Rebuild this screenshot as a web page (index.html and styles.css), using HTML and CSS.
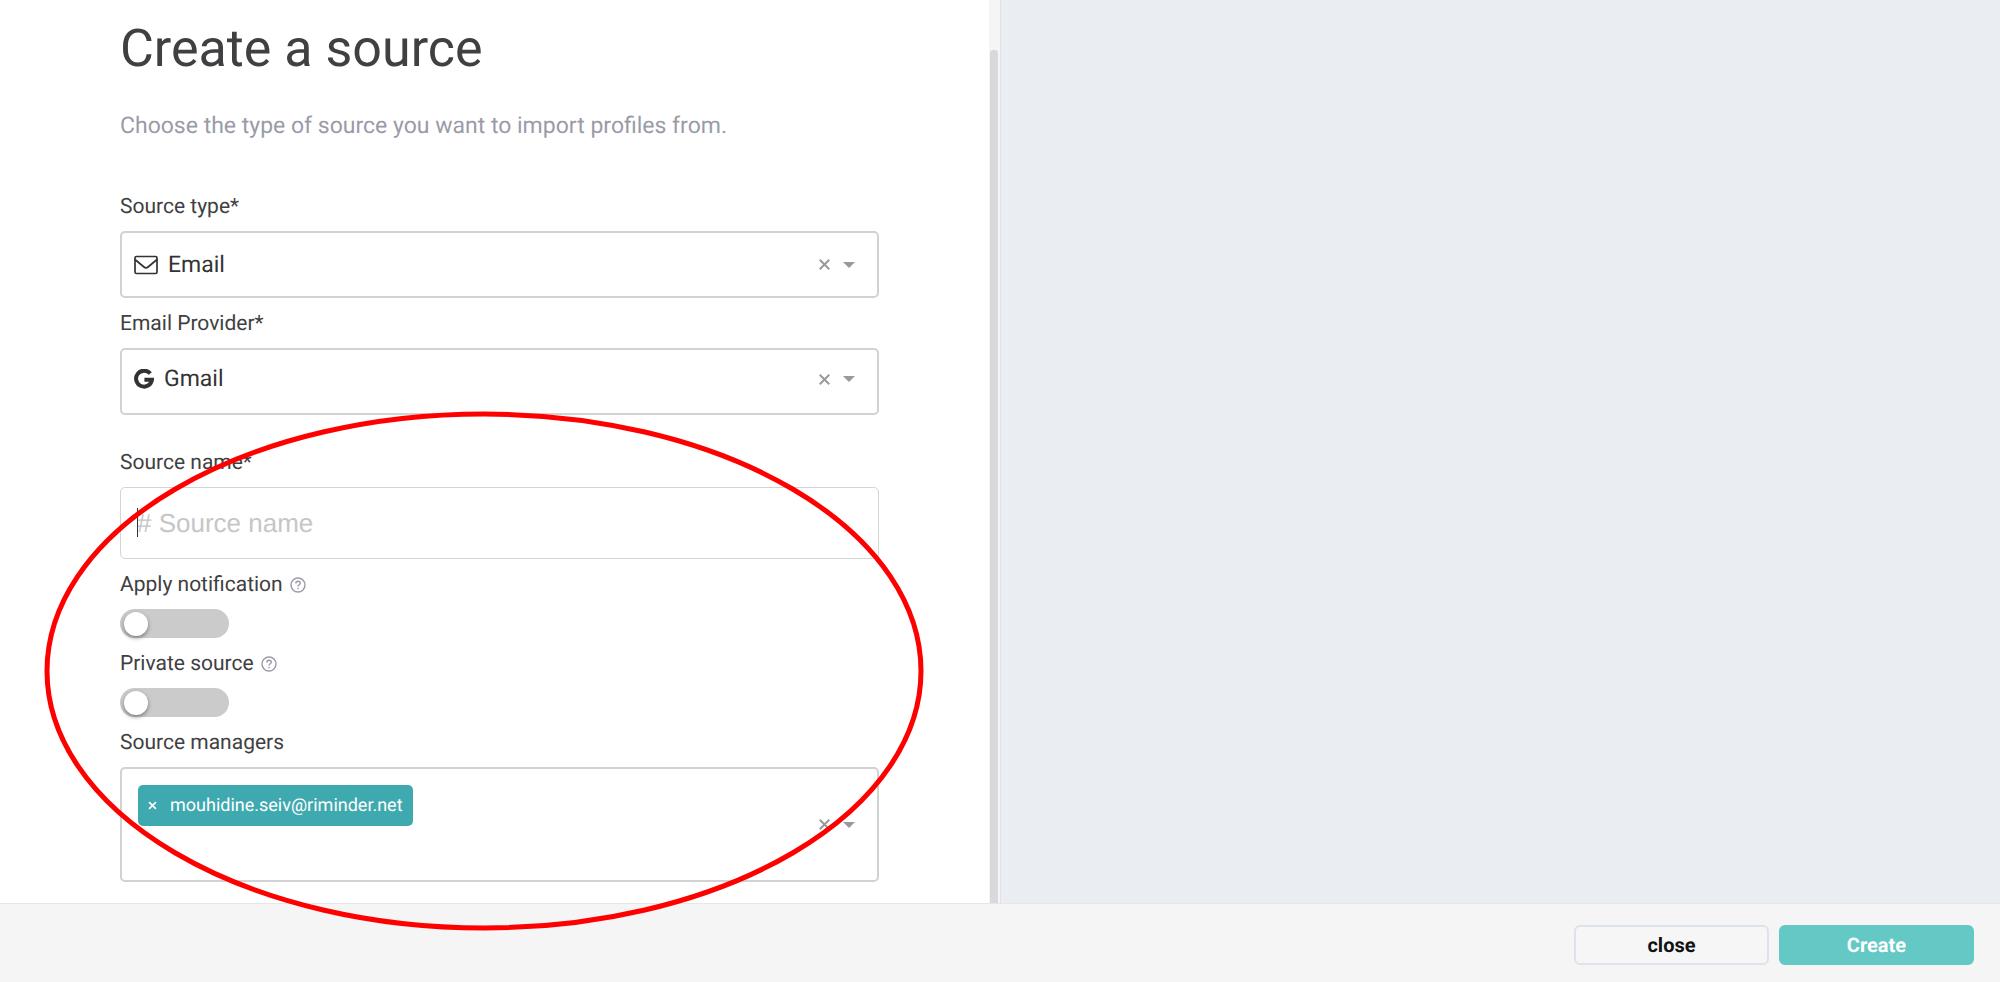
FILE: index.html
```html
<!DOCTYPE html>
<html lang="en">
<head>
<meta charset="utf-8">
<title>Create a source</title>
<link rel="stylesheet" href="styles.css">
</head>
<body>
<div class="page">
  <div class="panes">
    <main class="form-pane">
      <form class="form" id="source-form">
        <h1 class="title">Create a source</h1>
        <p class="subtitle">Choose the type of source you want to import profiles from.</p>

        <div class="field">
          <label class="label" for="source-type">Source type*</label>
          <div class="box">
            <svg class="icon-mail" viewBox="0 0 24 20" aria-hidden="true"><rect x="1" y="1.500" width="22" height="17" rx="1.500"/><path d="M1 4.500C4 7 7 9.500 10 12c1.500 1.200 2.500 1.200 4 0 3-2.500 6-5 9-7.500"/></svg>
            <select class="select" id="source-type"><option>Email</option></select>
            <button class="clear" type="button" aria-label="Clear source type"><svg viewBox="0 0 10 10"><path d="M.7.7l8.600 8.600M9.300.7L.7 9.300"/></svg></button>
            <span class="arrow"></span>
          </div>
        </div>

        <div class="field">
          <label class="label" for="provider">Email Provider*</label>
          <div class="box box-raised">
            <svg class="icon-google" viewBox="0 0 20 20" aria-hidden="true"><path d="M16.300 4.600A8 8 0 1 0 18 10.800h-7.600"/></svg>
            <select class="select" id="provider"><option>Gmail</option></select>
            <button class="clear" type="button" aria-label="Clear provider"><svg viewBox="0 0 10 10"><path d="M.7.7l8.600 8.600M9.300.7L.7 9.300"/></svg></button>
            <span class="arrow"></span>
          </div>
        </div>

        <div class="field field-spaced">
          <label class="label" for="source-name">Source name*</label>
          <div class="input-wrap">
            <input class="input" id="source-name" type="text" placeholder="# Source name">
            <span class="caret"></span>
          </div>
        </div>

        <div class="field">
          <label class="label" for="notify">Apply notification
            <svg class="help" viewBox="0 0 16 16" aria-hidden="true"><circle cx="8" cy="8" r="7"/><path d="M5.800 6.400c0-3 4.500-2.800 4.500-.2C10.300 7.700 8 7.800 8 9.600M8 10.700v1.500"/></svg>
          </label>
          <input class="toggle" id="notify" type="checkbox">
        </div>

        <div class="field">
          <label class="label" for="private">Private source
            <svg class="help" viewBox="0 0 16 16" aria-hidden="true"><circle cx="8" cy="8" r="7"/><path d="M5.800 6.400c0-3 4.500-2.800 4.500-.2C10.300 7.700 8 7.800 8 9.600M8 10.700v1.500"/></svg>
          </label>
          <input class="toggle" id="private" type="checkbox">
        </div>

        <div class="field">
          <label class="label" for="managers">Source managers</label>
          <div class="box box-tall">
            <div class="tags">
              <span class="tag"><button class="tag-remove" type="button" aria-label="Remove manager"><svg viewBox="0 0 10 10"><path d="M1.200 1.200l7.600 7.600M8.800 1.200L1.200 8.800"/></svg></button>mouhidine.seiv@riminder.net</span>
              <input class="tag-input" id="managers" type="text">
            </div>
            <button class="clear" type="button" aria-label="Clear managers"><svg viewBox="0 0 10 10"><path d="M.7.7l8.600 8.600M9.300.7L.7 9.300"/></svg></button>
            <span class="arrow"></span>
          </div>
        </div>
      </form>
      <div class="scroll-track"><div class="scroll-thumb"></div></div>
    </main>
    <aside class="preview"></aside>
  </div>
  <footer class="footer">
    <button class="btn btn-close" type="button">close</button>
    <button class="btn btn-create" type="submit" form="source-form">Create</button>
  </footer>
  <svg class="highlight" viewBox="0 0 880 520" aria-hidden="true"><ellipse cx="440" cy="260" rx="437" ry="257"/></svg>
</div>
</body>
</html>
```
FILE: styles.css
```css
* {
  box-sizing: border-box;
}

body {
  margin: 0;
  font-family: Roboto, "Liberation Sans", sans-serif;
  color: #3f4042;
  text-rendering: geometricPrecision;
}

button,
input,
select {
  margin: 0;
  font-family: inherit;
  color: inherit;
  text-rendering: inherit;
}

.page {
  position: relative;
  display: flex;
  flex-direction: column;
  min-height: 100vh;
  overflow: hidden;
}

.panes {
  flex: 1;
  display: grid;
  grid-template-columns: 1fr 1fr;
}

.form-pane {
  display: flex;
  background: #fff;
}

.form {
  flex: 1;
  padding: 17px 11% 21px 12%;
}

.title {
  margin: 0 0 31px;
  font-size: 52px;
  line-height: 64px;
  font-weight: 400;
}

.subtitle {
  margin: 0 0 55px;
  font-size: 23px;
  line-height: 28px;
  color: #9a9ba8;
}

.field {
  display: flex;
  flex-direction: column;
  gap: 12px;
  margin-top: 14px;
}

.field-spaced {
  margin-top: 36px;
}

.label {
  display: flex;
  align-items: center;
  gap: 7px;
  font-size: 21px;
  line-height: 24px;
}

.help {
  width: 16px;
  height: 16px;
  fill: none;
  stroke: #9a9ba8;
  stroke-width: 1.4;
}

.box {
  display: flex;
  align-items: center;
  min-height: 67px;
  padding: 0 22px 0 12px;
  border: 2px solid #d2d2d2;
  border-radius: 5px;
  background: #fff;
}

.box-raised {
  padding-bottom: 5px;
}

.box-tall {
  min-height: 115px;
}

.icon-mail {
  width: 24px;
  height: 20px;
  margin-right: 10px;
  fill: none;
  stroke: #333;
  stroke-width: 1.7;
}

.icon-google {
  width: 20px;
  height: 20px;
  margin-right: 10px;
  fill: none;
  stroke: #333;
  stroke-width: 4;
}

.select {
  flex: 1;
  min-width: 0;
  padding: 0;
  border: 0;
  background: none;
  appearance: none;
  color: #333;
  font-size: 23px;
  line-height: 28px;
}

.clear {
  display: flex;
  padding: 0;
  border: 0;
  background: none;
}

.clear svg {
  width: 11px;
  height: 11px;
  stroke: #999;
  stroke-width: 1.8;
}

.arrow {
  margin-left: 13px;
  border: 6px solid transparent;
  border-top-color: #999;
  border-bottom: 0;
}

.input-wrap {
  position: relative;
}

.input {
  display: block;
  width: 100%;
  height: 72px;
  padding: 0 16px;
  border: 1px solid #d4d4d6;
  border-radius: 5px;
  font-family: "Liberation Sans", Arial, sans-serif;
  font-size: 26px;
}

.input::placeholder {
  color: #c6c6c6;
  opacity: 1;
}

.caret {
  position: absolute;
  top: 21px;
  left: 17px;
  width: 1px;
  height: 29px;
  background: #333;
}

.toggle {
  appearance: none;
  display: flex;
  align-items: center;
  width: 109px;
  height: 29px;
  padding: 0 4px;
  border-radius: 15px;
  background: #cbcbcb;
}

.toggle::before {
  content: "";
  width: 24px;
  height: 24px;
  border-radius: 50%;
  background: #fff;
  box-shadow: 0 2px 4px rgba(0, 0, 0, 0.4);
}

.toggle:checked {
  justify-content: flex-end;
  background: #64c8c4;
}

.tags {
  flex: 1;
  align-self: flex-start;
  display: flex;
  flex-direction: column;
  align-items: flex-start;
  padding: 16px 4px 0;
}

.tag {
  display: flex;
  align-items: center;
  height: 41px;
  padding: 0 10px;
  border-radius: 5px;
  background: #3fa9b0;
  color: #fff;
  font-size: 18px;
  line-height: 24px;
}

.tag-remove {
  display: flex;
  margin-right: 13px;
  padding: 0;
  border: 0;
  background: none;
}

.tag-remove svg {
  width: 9px;
  height: 9px;
  stroke: #fff;
  stroke-width: 1.8;
}

.tag-input {
  width: 100%;
  height: 32px;
  border: 0;
  outline: 0;
  background: none;
  font-size: 18px;
}

.scroll-track {
  width: 11px;
  padding: 50px 2px 0 1px;
  display: flex;
  background: #f5f5f5;
}

.scroll-thumb {
  flex: 1;
  border-radius: 3px 3px 0 0;
  background: #d8d8dd;
}

.preview {
  border-left: 1px solid #d9e3ec;
  background: #eaedf2;
}

.footer {
  display: flex;
  justify-content: flex-end;
  gap: 10px;
  padding: 21px 26px 17px;
  border-top: 1px solid #e6e6e8;
  background: #f5f5f5;
}

.btn {
  width: 195px;
  height: 40px;
  padding: 0;
  border: 2px solid #dde3ea;
  border-radius: 6px;
  background: #f6f6f6;
  color: #111;
  font-size: 20px;
  font-weight: 700;
}

.btn-create {
  border-color: #64c8c4;
  background: #64c8c4;
  color: #fff;
}

.highlight {
  position: absolute;
  top: 411px;
  left: 44px;
  width: 880px;
  height: 520px;
  fill: none;
  stroke: #f00;
  stroke-width: 5;
  pointer-events: none;
}
```
